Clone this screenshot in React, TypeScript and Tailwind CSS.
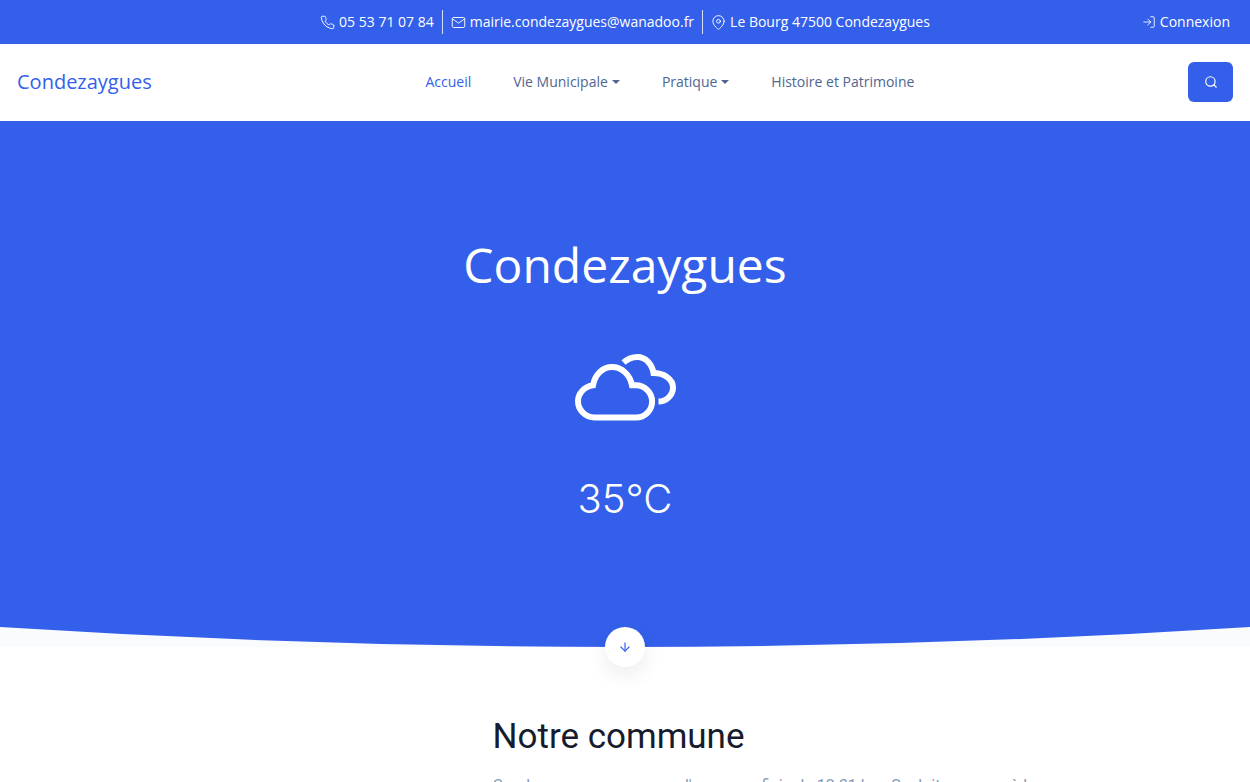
import { FiArrowDown, FiLogIn, FiMail, FiMapPin, FiPhone, FiSearch } from 'react-icons/fi'

type NavItem = {
  label: string
  href: string
  active?: boolean
  dropdown?: boolean
}

const navItems: NavItem[] = [
  { label: 'Accueil', href: '#accueil', active: true },
  { label: 'Vie Municipale', href: '#vie-municipale', dropdown: true },
  { label: 'Pratique', href: '#pratique', dropdown: true },
  { label: 'Histoire et Patrimoine', href: '#histoire' },
]

function TopBar() {
  return (
    <div className="grid grid-cols-[1fr_auto_1fr] items-center h-11 px-5 bg-[#335fea] text-white text-sm font-medium">
      <div />
      <div className="flex items-center">
        <a href="tel:0553710784" className="flex items-center gap-1 pr-2">
          <FiPhone size={15} strokeWidth={1.5} />
          05 53 71 07 84
        </a>
        <a href="mailto:mairie.condezaygues@wanadoo.fr" className="flex items-center gap-1 h-6 px-2 border-x border-white/80">
          <FiMail size={15} strokeWidth={1.5} />
          mairie.condezaygues@wanadoo.fr
        </a>
        <span className="flex items-center gap-1 pl-2">
          <FiMapPin size={15} strokeWidth={1.5} />
          Le Bourg 47500 Condezaygues
        </span>
      </div>
      <a href="#connexion" className="flex items-center gap-1 justify-self-end">
        <FiLogIn size={14} strokeWidth={1.5} />
        Connexion
      </a>
    </div>
  )
}

function Header() {
  return (
    <header className="flex items-center justify-between h-[77px] px-[17px] pb-0.5 bg-white">
      <a href="#accueil" className="text-xl font-medium text-[#335fea]">Condezaygues</a>
      <nav className="flex items-center gap-[42px] text-sm font-medium text-[#506690]">
        {navItems.map(item => (
          <a
            key={item.label}
            href={item.href}
            className={item.active ? 'text-[#335fea]' : 'flex items-center gap-1'}
          >
            {item.label}
            {item.dropdown && (
              <svg width="8" height="4" viewBox="0 0 8 4" fill="currentColor" aria-hidden="true">
                <path d="M0 0h8L4 4z" />
              </svg>
            )}
          </a>
        ))}
      </nav>
      <button type="button" aria-label="Rechercher" className="flex items-center justify-center w-[45px] h-10 rounded-md bg-[#335fea] text-white">
        <FiSearch size={14} strokeWidth={2} />
      </button>
    </header>
  )
}

function CloudsIcon() {
  return (
    <svg width="101" height="67" viewBox="0 0 101 67" fill="none" stroke="currentColor" strokeWidth="6" aria-hidden="true">
      <path d="M19.5 63.5C10.5 63.5 3 56 3 47.3C3 39.5 9.5 32.5 18 31.3C20 20.5 27.5 13 37 13C46.5 13 55 20.5 57 31.3H61A16.1 16.1 0 0 1 61 63.5Z" />
      <path d="M48.5 8.5C52.5 5 57.5 3 62.5 3C70.5 3 77 10 78.5 19C89 19 98 25 98 33.5C98 41 91.5 47.5 83.5 47.5" />
    </svg>
  )
}

function Hero() {
  return (
    <section className="relative bg-[#335fea] text-white">
      <div className="flex flex-col items-center pt-[108px] pb-[97px]">
        <h1 className="text-5xl leading-[72px] font-medium">Condezaygues</h1>
        <div className="pt-[53px] pb-[53px]">
          <CloudsIcon />
        </div>
        <p className="font-[Inter,sans-serif] text-[40px] leading-[50px] font-light">35°C</p>
      </div>
      {/* Bottom curve */}
      <svg className="block w-full h-[26px]" viewBox="0 0 1250 26" preserveAspectRatio="none" aria-hidden="true">
        <path d="M0 6Q625 46 1250 6V26H0Z" fill="#f9fbfd" />
      </svg>
      <a
        href="#commune"
        aria-label="Notre commune"
        className="absolute left-1/2 bottom-0 -translate-x-1/2 translate-y-1/2 flex items-center justify-center size-10 rounded-full bg-white text-[#335fea] shadow-[0_8px_20px_rgba(22,28,45,0.08)]"
      >
        <FiArrowDown size={14} />
      </a>
    </section>
  )
}

export default function App() {
  return (
    <div className="h-screen overflow-hidden bg-white font-['Open_Sans',sans-serif]">
      <TopBar />
      <Header />
      <main>
        <Hero />
        <section id="commune" className="pt-[66px] pl-[39.4%] pr-[15%] font-[Roboto,sans-serif]">
          <h2 className="text-[35px] leading-[48px] text-[#161c2d]">Notre commune</h2>
          <p className="pt-[13px] text-base text-[#869ab8]">
            Condezaygues, commune d'une superficie de 12.31 km. Se doit son nom à la
          </p>
        </section>
      </main>
    </div>
  )
}
